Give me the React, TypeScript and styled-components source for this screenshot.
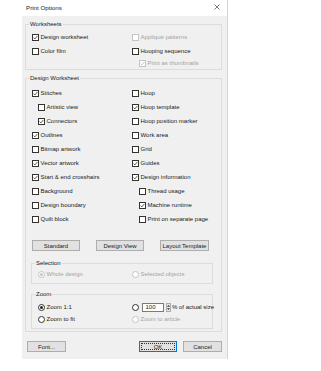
import React from 'react';
import styled, { createGlobalStyle } from 'styled-components';

const GlobalStyle = createGlobalStyle`
  html, body {
    margin: 0;
    padding: 0;
    background: #ffffff;
  }
  body {
    font-family: 'Liberation Sans', Arial, sans-serif;
    font-size: 6px;
    color: #1a1a1a;
  }
`;

const Page = styled.div`
  padding-left: 22px;
`;

const Dialog = styled.div`
  width: 205px;
  border-right: 1px solid #d4d4d4;
  background: #f0f0f0;
`;

const TitleBar = styled.div`
  height: 16px;
  background: #ffffff;
  display: flex;
  align-items: center;
  justify-content: space-between;
  padding: 0 7px 2px 4px;
  box-sizing: border-box;
`;

const Title = styled.span`
  font-size: 6.2px;
`;

const Body = styled.div`
  padding: 4px 5px 7px 3px;
`;

const Group = styled.fieldset<{ $inset?: boolean; $top?: number }>`
  margin: ${(p) => `${p.$top ?? 0}px ${p.$inset ? '8px' : '0'} 0 ${p.$inset ? '5px' : '0'}`};
  padding: ${(p) => (p.$inset ? '0 0 3px 0' : '0 0 2px 0')};
  border: 1px solid #dcdcdc;
  min-width: 0;
`;

const Legend = styled.legend`
  margin-left: 3px;
  padding: 0 1px;
  height: 8px;
  line-height: 8px;
`;

const Options = styled.div<{ $right: number; $top: number; $rows?: string; $row?: number }>`
  display: grid;
  grid-template-columns: ${(p) => p.$right}px 1fr;
  ${(p) => (p.$rows ? `grid-template-rows: ${p.$rows};` : '')}
  grid-auto-rows: ${(p) => p.$row ?? 14}px;
  padding: ${(p) => p.$top}px 0 0 6px;
`;

const Item = styled.label<{ $indent?: number; $disabled?: boolean }>`
  display: flex;
  align-items: center;
  gap: 1.5px;
  padding-left: ${(p) => p.$indent ?? 0}px;
  color: ${(p) => (p.$disabled ? '#a3a3a3' : '#1a1a1a')};
  white-space: nowrap;
`;

const Box = styled.span<{ $disabled?: boolean }>`
  width: 7px;
  height: 7px;
  box-sizing: border-box;
  border: 1px solid ${(p) => (p.$disabled ? '#c4c4c4' : '#333333')};
  background: #ffffff;
  display: inline-flex;
  flex: none;
`;

const Round = styled.span<{ $disabled?: boolean }>`
  width: 7px;
  height: 7px;
  box-sizing: border-box;
  border-radius: 50%;
  border: 1px solid ${(p) => (p.$disabled ? '#c4c4c4' : '#333333')};
  background: #ffffff;
  display: inline-flex;
  align-items: center;
  justify-content: center;
  flex: none;
`;

const Dot = styled.span<{ $disabled?: boolean }>`
  width: 3px;
  height: 3px;
  border-radius: 50%;
  background: ${(p) => (p.$disabled ? '#c4c4c4' : '#222222')};
`;

const ButtonRow = styled.div<{ $gap: number; $top: number; $left: number }>`
  display: flex;
  gap: ${(p) => p.$gap}px;
  margin: ${(p) => p.$top}px 0 0 ${(p) => p.$left}px;
`;

const Button = styled.button<{ $w: number; $focus?: boolean }>`
  width: ${(p) => p.$w}px;
  height: 11px;
  padding: 0;
  font-family: inherit;
  font-size: 6px;
  color: #1a1a1a;
  background: #e1e1e1;
  border: 1px solid ${(p) => (p.$focus ? '#0078d7' : '#adadad')};
  ${(p) => (p.$focus ? 'outline: 1px dotted #333; outline-offset: -3px;' : '')}
`;

const Spacer = styled.div`
  flex: 1;
`;

const Spin = styled.span`
  display: inline-flex;
  align-items: center;
  gap: 2px;
  margin-left: 1px;
`;

const SpinInput = styled.span`
  width: 22px;
  height: 9px;
  box-sizing: border-box;
  border: 1px solid #7a7a7a;
  background: #ffffff;
  line-height: 7px;
  padding-left: 3px;
`;

const SpinArrows = styled.span`
  width: 5px;
  height: 9px;
  box-sizing: border-box;
  border: 1px solid #adadad;
  background: #e8e8e8;
  display: inline-flex;
`;

const Check = ({ on, disabled }: { on?: boolean; disabled?: boolean }) => (
  <Box $disabled={disabled}>
    {on && (
      <svg width="5" height="5" viewBox="0 0 5 5">
        <path d="M0.6 2.6 L1.9 3.9 L4.4 0.9" fill="none" stroke={disabled ? '#b8b8b8' : '#333'} strokeWidth="0.8" />
      </svg>
    )}
  </Box>
);

type Opt = { text: string; on?: boolean; indent?: number; disabled?: boolean };

const CheckItem = ({ text, on, indent, disabled }: Opt) => (
  <Item $indent={indent} $disabled={disabled}>
    <Check on={on} disabled={disabled} />
    {text}
  </Item>
);

const Radio = ({ text, on, disabled }: Opt) => (
  <Item $disabled={disabled}>
    <Round $disabled={disabled}>{on && <Dot $disabled={disabled} />}</Round>
    {text}
  </Item>
);

const designOptions: Opt[] = [
  { text: 'Stitches', on: true },
  { text: 'Hoop' },
  { text: 'Artistic view', indent: 6 },
  { text: 'Hoop template', on: true },
  { text: 'Connectors', on: true, indent: 6 },
  { text: 'Hoop position marker' },
  { text: 'Outlines', on: true },
  { text: 'Work area' },
  { text: 'Bitmap artwork' },
  { text: 'Grid' },
  { text: 'Vector artwork', on: true },
  { text: 'Guides', on: true },
  { text: 'Start & end crosshairs', on: true },
  { text: 'Design information', on: true },
  { text: 'Background' },
  { text: 'Thread usage', indent: 7 },
  { text: 'Design boundary' },
  { text: 'Machine runtime', on: true, indent: 7 },
  { text: 'Quilt block' },
  { text: 'Print on separate page', indent: 7 },
];

const App = () => {
  return (
    <>
      <GlobalStyle />
      <Page>
        <Dialog>
          <TitleBar>
            <Title>Print Options</Title>
            <svg width="6" height="6" viewBox="0 0 6 6">
              <path d="M0.5 0.5 L5.5 5.5 M5.5 0.5 L0.5 5.5" stroke="#444" strokeWidth="0.7" />
            </svg>
          </TitleBar>
          <Body>
            <Group style={{ paddingBottom: 1 }}>
              <Legend>Worksheets</Legend>
              <Options $right={100} $top={2} $rows="14px 14px 10px">
                <CheckItem text="Design worksheet" on />
                <CheckItem text="Appliqué patterns" disabled />
                <CheckItem text="Color film" />
                <CheckItem text="Hooping sequence" />
                <span />
                <Item $indent={7} $disabled>
                  <Check on disabled />
                  Print as thumbnails
                </Item>
              </Options>
            </Group>
            <Group $top={4}>
              <Legend>Design Worksheet</Legend>
              <Options $right={100} $top={4}>
                {designOptions.map((o) => (
                  <CheckItem key={o.text} {...o} />
                ))}
              </Options>
              <ButtonRow $gap={16} $top={14} $left={6}>
                <Button $w={48}>Standard</Button>
                <Button $w={48}>Design View</Button>
                <Button $w={49}>Layout Template</Button>
              </ButtonRow>
              <Group $inset $top={8}>
                <Legend>Selection</Legend>
                <Options $right={94} $top={1} $row={12}>
                  <Radio text="Whole design" on disabled />
                  <Radio text="Selected objects" disabled />
                </Options>
              </Group>
              <Group $inset $top={6}>
                <Legend>Zoom</Legend>
                <Options $right={94} $top={3} $row={12}>
                  <Radio text="Zoom 1:1" on />
                  <Item>
                    <Round />
                    <Spin>
                      <SpinInput>100</SpinInput>
                      <SpinArrows>
                        <svg width="3" height="7" viewBox="0 0 3 7">
                          <path d="M1.5 1 L3 2.8 L0 2.8 Z M1.5 6 L3 4.2 L0 4.2 Z" fill="#333" />
                        </svg>
                      </SpinArrows>
                    </Spin>
                    % of actual size
                  </Item>
                  <Radio text="Zoom to fit" />
                  <Radio text="Zoom to article" disabled />
                </Options>
              </Group>
            </Group>
            <ButtonRow $gap={6} $top={9} $left={2}>
              <Button $w={39}>Font...</Button>
              <Spacer />
              <Button $w={38} $focus>OK</Button>
              <Button $w={39}>Cancel</Button>
            </ButtonRow>
          </Body>
        </Dialog>
      </Page>
    </>
  );
};

export default App;
